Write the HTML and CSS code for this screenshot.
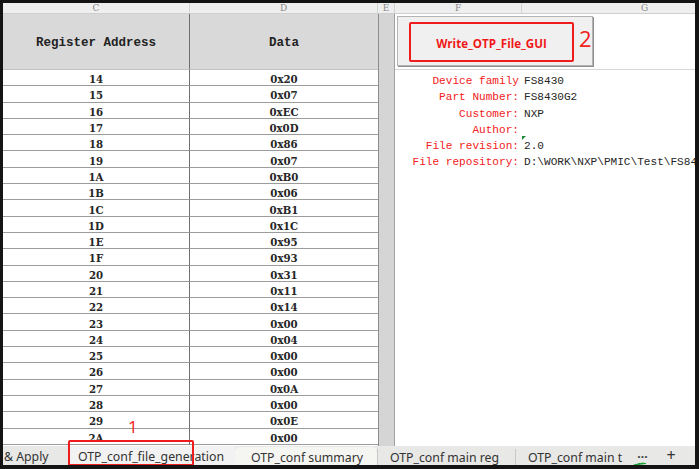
FILE: index.html
```html
<!DOCTYPE html>
<html lang="en">
<head>
<meta charset="utf-8">
<title>OTP_conf_file_generation</title>
<link rel="stylesheet" href="styles.css">
</head>
<body>
<div class="frame">
  <div class="colheads">
    <div class="ch">C</div>
    <div class="ch">D</div>
    <div class="ch">E</div>
    <div class="ch">F</div>
    <div class="ch chg">G</div>
  </div>
  <div class="sheet">
    <div class="table">
      <div class="hcell">Register Address</div><div class="hcell hd">Data</div>
      <div class="cell">14</div><div class="cell dd">0x20</div>
      <div class="cell">15</div><div class="cell dd">0x07</div>
      <div class="cell">16</div><div class="cell dd">0xEC</div>
      <div class="cell">17</div><div class="cell dd">0x0D</div>
      <div class="cell">18</div><div class="cell dd">0x86</div>
      <div class="cell">19</div><div class="cell dd">0x07</div>
      <div class="cell">1A</div><div class="cell dd">0xB0</div>
      <div class="cell">1B</div><div class="cell dd">0x06</div>
      <div class="cell">1C</div><div class="cell dd">0xB1</div>
      <div class="cell">1D</div><div class="cell dd">0x1C</div>
      <div class="cell">1E</div><div class="cell dd">0x95</div>
      <div class="cell">1F</div><div class="cell dd">0x93</div>
      <div class="cell">20</div><div class="cell dd">0x31</div>
      <div class="cell">21</div><div class="cell dd">0x11</div>
      <div class="cell">22</div><div class="cell dd">0x14</div>
      <div class="cell">23</div><div class="cell dd">0x00</div>
      <div class="cell">24</div><div class="cell dd">0x04</div>
      <div class="cell">25</div><div class="cell dd">0x00</div>
      <div class="cell">26</div><div class="cell dd">0x00</div>
      <div class="cell">27</div><div class="cell dd">0x0A</div>
      <div class="cell">28</div><div class="cell dd">0x00</div>
      <div class="cell">29</div><div class="cell dd">0x0E</div>
      <div class="cell">2A</div><div class="cell dd">0x00</div>
    </div>
    <div class="ecol"></div>
    <div class="panel">
      <div class="btnrow">
        <div class="btn"><span class="btnmark">Write_OTP_File_GUI</span></div>
      </div>
      <div class="lbl">Device family</div><div class="val">FS8430</div>
      <div class="lbl">Part Number:</div><div class="val">FS8430G2</div>
      <div class="lbl">Customer:</div><div class="val">NXP</div>
      <div class="lbl">Author:</div><div class="val"></div>
      <div class="lbl">File revision:</div><div class="val flag">2.0</div>
      <div class="lbl">File repository:</div><div class="val">D:\WORK\NXP\PMIC\Test\FS8430_OTP</div>
    </div>
  </div>
  <div class="tabs">
    <div class="tab t-apply">&amp; Apply</div>
    <div class="tab t-active">OTP_conf_file_generation</div>
    <div class="tab t-hover">OTP_conf summary</div>
    <div class="tab t-sep">OTP_conf main reg</div>
    <div class="tab t-sep t-last">OTP_conf main t</div>
    <div class="tab t-more">···</div>
    <div class="tab t-plus">+</div>
  </div>
  <div class="note n1">1</div>
  <div class="note n2">2</div>
  <div class="mark-tab"></div>
  <div class="green-tick"></div>
</div>
</body>
</html>
```

FILE: styles.css
```css
* { box-sizing: border-box; }
html, body { margin: 0; padding: 0; background: #111; }
.frame {
  position: relative;
  width: 699px;
  height: 469px;
  border-style: solid;
  border-color: #141414;
  border-width: 3px 4px 4px 3px;
  background: #fff;
  overflow: hidden;
}
.colheads {
  display: grid;
  grid-template-columns: 187px 188px 17px 127px 246px;
  height: 11px;
  background: #efefef;
  border-bottom: 1px solid #cfcfcf;
}
.ch {
  font-family: "DejaVu Serif", serif;
  font-size: 9px;
  line-height: 10px;
  color: #8a8a8a;
  text-align: center;
  border-right: 1px solid #d4d4d4;
}
.sheet {
  display: flex;
  height: 432px;
  overflow: hidden;
}
.table {
  display: grid;
  grid-template-columns: 187px 188px;
  grid-template-rows: 56px;
  grid-auto-rows: 16.3px;
  flex: none;
}
.hcell {
  background: #d9d9d9;
  border-right: 1px solid #707070;
  border-bottom: 1px solid #c4c4c4;
  display: flex;
  align-items: center;
  justify-content: center;
  font-family: "Liberation Mono", monospace;
  font-weight: bold;
  font-size: 12.5px;
  color: #222;
  padding-top: 2px;
}
.hcell.hd { border-right: none; }
.cell {
  border-right: 1px solid #707070;
  border-bottom: 1px solid #9c9c9c;
  display: flex;
  align-items: center;
  justify-content: center;
  font-family: "DejaVu Serif", serif;
  font-weight: bold;
  font-size: 10.2px;
  color: #262626;
  padding-top: 3px;
}
.cell.dd { border-right: none; }
.ecol {
  flex: none;
  width: 17px;
  background: #d5d5d5;
  border-left: 1px solid #8c8c8c;
  border-right: 1px solid #a0a0a0;
}
.panel {
  flex: none;
  width: 300px;
  display: grid;
  grid-template-columns: 127px 173px;
  grid-template-rows: 56px;
  grid-auto-rows: 16.3px;
  align-content: start;
}
.btnrow {
  grid-column: 1 / 3;
  border-bottom: 1px solid #d6d6d6;
  padding: 2px 0 0 2px;
}
.btn {
  width: 196px;
  height: 50px;
  background: #f0f0f0;
  border: 1px solid #b4b4b4;
  box-shadow: 1px 1px 0 #8e8e8e;
  padding: 5px 0 0 11px;
}
.btnmark {
  display: flex;
  align-items: center;
  justify-content: center;
  width: 165px;
  height: 40px;
  border: 2px solid #ee1c1c;
  border-radius: 2px;
  color: #f01818;
  font-family: "Open Sans", "Noto Sans", sans-serif;
  font-weight: bold;
  font-size: 11.6px;
  padding-top: 2px;
}
.lbl, .val {
  font-family: "Liberation Mono", monospace;
  font-size: 11.1px;
  line-height: 16.3px;
  white-space: nowrap;
  padding-top: 3px;
}
.lbl {
  color: #f22020;
  text-align: right;
  padding-right: 3px;
}
.val {
  color: #262626;
  padding-left: 2px;
  position: relative;
  overflow: hidden;
}
.val.flag::before {
  content: "";
  position: absolute;
  left: 0;
  top: 1px;
  border-top: 4px solid #1e8a3a;
  border-right: 4px solid transparent;
}
.tabs {
  display: flex;
  align-items: stretch;
  height: 22px;
  background: #e8e8e6;
  font-family: "Noto Sans", "Open Sans", sans-serif;
  font-size: 12.3px;
  color: #333;
  white-space: nowrap;
}
.tab {
  flex: none;
  padding-top: 2px;
  line-height: 18px;
}
.t-apply { width: 65px; padding-left: 1px; }
.t-active {
  width: 167px;
  padding-left: 10px;
  background: #f2f2f2;
  border-bottom: 2px solid #1e8a3a;
}
.t-hover {
  width: 142px;
  padding-left: 16px;
  background: #f5f5f2;
  border-radius: 5px 5px 0 0;
  margin-top: 1px;
}
.t-sep {
  width: 138px;
  padding-left: 12px;
  border-left: 1px solid #c8c8c8;
  margin: 3px 0 2px;
  padding-top: 0;
}
.t-last { width: 114px; overflow: hidden; padding-right: 12px; }
.t-more { width: 27px; text-align: center; font-weight: bold; color: #444; }
.t-plus { width: 30px; text-align: center; font-size: 16px; padding-top: 0; }
.note {
  position: absolute;
  color: #f02020;
  font-family: "Open Sans", "Noto Sans", sans-serif;
  line-height: 1;
}
.n1 { left: 125px; top: 415px; font-size: 17px; }
.n2 { left: 576px; top: 24px; font-size: 22px; }
.mark-tab {
  position: absolute;
  left: 65px;
  top: 437px;
  width: 126px;
  height: 26px;
  border: 2px solid #ee1c1c;
  border-radius: 2px;
}
.green-tick {
  position: absolute;
  left: 628px;
  top: 460px;
  width: 16px;
  height: 6px;
  border-top: 2px solid #1fa33a;
  border-radius: 50% 50% 0 0;
  transform: rotate(-12deg);
}
```
